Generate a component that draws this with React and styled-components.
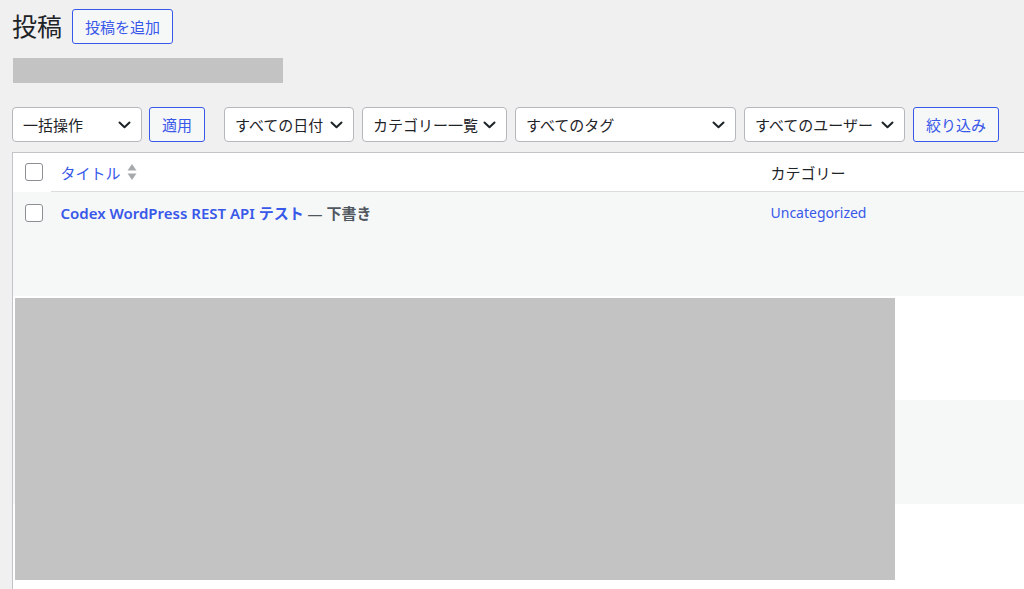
import React from 'react';
import styled, { createGlobalStyle } from 'styled-components';

const ACCENT = '#3858e9';

const GlobalStyle = createGlobalStyle`
  html, body {
    margin: 0;
    padding: 0;
    background: #f0f0f1;
    overflow: hidden;
  }
  body {
    font-family: "Noto Sans", "Noto Sans CJK JP", sans-serif;
    color: #1d2327;
  }
`;

const FILTERS = [
  { label: 'すべての日付', width: 130 },
  { label: 'カテゴリー一覧', width: 145 },
  { label: 'すべてのタグ', width: 221 },
  { label: 'すべてのユーザー', width: 161 },
];

const POSTS = [{ title: 'Codex WordPress REST API テスト', state: '下書き', category: 'Uncategorized' }];

const Chevron = () => (
  <svg width="13" height="8" viewBox="0 0 13 8" fill="none">
    <path d="M1.5 1.5 L6.5 6.3 L11.5 1.5" stroke="#1d2327" strokeWidth="2" strokeLinecap="round" strokeLinejoin="round" />
  </svg>
);

const SortIcon = () => (
  <svg width="10" height="18" viewBox="0 0 10 18">
    <path d="M5 1 L9.5 7.5 H0.5 Z" fill="#a7aaad" />
    <path d="M5 17 L9.5 10.5 H0.5 Z" fill="#a7aaad" />
  </svg>
);

export default function App() {
  return (
    <Wrapper>
      <GlobalStyle />
      <Header>
        <PageTitle>投稿</PageTitle>
        <Button>投稿を追加</Button>
      </Header>
      <Redacted $width={270} $height={25} />
      <Toolbar>
        <Select $width={130}>
          <span>一括操作</span>
          <Chevron />
        </Select>
        <Button>適用</Button>
        <Filters>
          {FILTERS.map((f) => (
            <Select key={f.label} $width={f.width}>
              <span>{f.label}</span>
              <Chevron />
            </Select>
          ))}
          <Button>絞り込み</Button>
        </Filters>
      </Toolbar>
      <TableBox>
        <Table>
          <colgroup>
            <col style={{ width: 38 }} />
            <col style={{ width: 710 }} />
            <col />
          </colgroup>
          <thead>
            <tr>
              <CheckCell as="th">
                <Checkbox />
              </CheckCell>
              <HeadCell>
                <SortLink>
                  タイトル
                  <SortIcon />
                </SortLink>
              </HeadCell>
              <HeadCell>カテゴリー</HeadCell>
            </tr>
          </thead>
          <tbody>
            {POSTS.map((p) => (
              <Row key={p.title} $striped>
                <CheckCell>
                  <Checkbox />
                </CheckCell>
                <Cell>
                  <TitleLink>{p.title}</TitleLink>
                  <PostState> — {p.state}</PostState>
                </Cell>
                <Cell>
                  <CatLink>{p.category}</CatLink>
                </Cell>
              </Row>
            ))}
            {[false, true, false].map((striped, i) => (
              <Row key={i} $striped={striped} $last={i === 2}>
                <CheckCell />
                <Cell />
                <Cell />
              </Row>
            ))}
          </tbody>
        </Table>
        <Overlay />
      </TableBox>
    </Wrapper>
  );
}

const Wrapper = styled.div`
  padding: 9px 0 0 12px;
  width: 1040px;
`;

const Header = styled.div`
  display: flex;
  align-items: center;
  gap: 10px;
  height: 35px;
`;

const PageTitle = styled.h1`
  margin: 0;
  font-size: 25px;
  font-weight: 400;
  line-height: 1;
  color: #1d2327;
`;

const Button = styled.button`
  flex: none;
  height: 35px;
  padding: 0 12px;
  border: 1px solid ${ACCENT};
  border-radius: 3px;
  background: #f6f7f7;
  color: ${ACCENT};
  font-family: inherit;
  font-size: 15px;
  font-weight: 400;
  white-space: nowrap;
  cursor: pointer;
`;

const Redacted = styled.div`
  width: ${(p) => p.$width}px;
  height: ${(p) => p.$height}px;
  margin: 14px 0 0 1px;
  background: #c3c3c3;
`;

const Toolbar = styled.div`
  display: flex;
  align-items: center;
  gap: 7px;
  margin-top: 24px;
  height: 35px;
`;

const Filters = styled.div`
  display: flex;
  align-items: center;
  gap: 8px;
  margin-left: 12px;
`;

const Select = styled.div`
  flex: none;
  box-sizing: border-box;
  display: flex;
  align-items: center;
  justify-content: space-between;
  width: ${(p) => p.$width}px;
  height: 35px;
  padding: 0 10px;
  background: #fff;
  border: 1px solid #b4b7bb;
  border-radius: 4px;
  font-size: 15px;
  white-space: nowrap;
  svg {
    flex: none;
    margin-left: 2px;
  }
`;

const TableBox = styled.div`
  position: relative;
  margin-top: 10px;
`;

const Table = styled.table`
  width: 100%;
  table-layout: fixed;
  border-collapse: collapse;
  background: #fff;
  border: 1px solid #c3c4c7;
  border-bottom: none;
  font-size: 15px;
`;

const HeadCell = styled.th`
  height: 38px;
  padding: 0 10px;
  text-align: left;
  font-weight: 400;
  border-bottom: 1px solid #dcdcde;
  color: #1d2327;
`;

const SortLink = styled.span`
  display: inline-flex;
  align-items: center;
  gap: 6px;
  color: ${ACCENT};
`;

const Row = styled.tr`
  background: ${(p) => (p.$striped ? '#f6f7f7' : '#fff')};
  height: ${(p) => (p.$last ? 86 : 104)}px;
`;

const CheckCell = styled.td`
  padding: 0 0 0 12px;
  vertical-align: top;
  thead & {
    vertical-align: middle;
  }
  tbody & {
    padding-top: 12px;
  }
`;

const Cell = styled.td`
  padding: 10px 10px 0;
  vertical-align: top;
`;

const Checkbox = styled.span`
  display: block;
  box-sizing: border-box;
  width: 18px;
  height: 18px;
  border: 1px solid #8c8f94;
  border-radius: 3px;
  background: #fff;
`;

const TitleLink = styled.a`
  color: ${ACCENT};
  font-weight: 600;
  font-size: 15px;
`;

const PostState = styled.span`
  color: #50575e;
  font-weight: 600;
`;

const CatLink = styled.a`
  color: ${ACCENT};
  font-size: 14px;
`;

const Overlay = styled.div`
  position: absolute;
  left: 3px;
  top: 146px;
  width: 880px;
  height: 282px;
  background: #c3c3c3;
`;
